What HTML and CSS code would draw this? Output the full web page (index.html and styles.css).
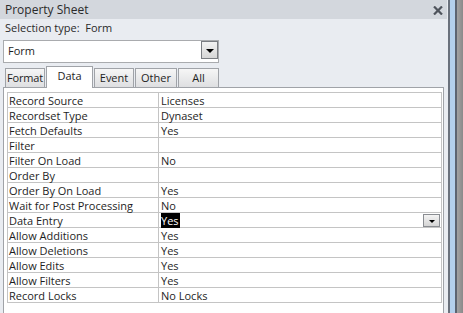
FILE: index.html
```html
<!DOCTYPE html>
<html lang="en">
<head>
    <meta charset="UTF-8">
    <title>Property Sheet</title>
    <link rel="stylesheet" href="styles.css">
</head>
<body>

<div class="window">
    <div class="sheet">
        <!-- Title bar -->
        <div class="title-bar">
            <span>Property Sheet</span>
            <span class="close">
                <svg width="10" height="9" viewBox="0 0 10 9">
                    <path d="M1 0.5 L9 8.5 M9 0.5 L1 8.5" stroke="#4f545c" stroke-width="2.2"/>
                </svg>
            </span>
        </div>

        <div class="selection">Selection type:&nbsp; Form</div>

        <!-- Object picker -->
        <div class="combo">
            <span class="combo-text">Form</span>
            <span class="combo-btn"><span class="arrow"></span></span>
        </div>

        <!-- Tabs -->
        <div class="tabs">
            <div class="tab tab-format">Format</div>
            <div class="tab tab-data active">Data</div>
            <div class="tab tab-event">Event</div>
            <div class="tab tab-other">Other</div>
            <div class="tab tab-all">All</div>
        </div>

        <div class="panel">
            <table class="props">
                <tr><td class="name">Record Source</td><td>Licenses</td></tr>
                <tr><td class="name">Recordset Type</td><td>Dynaset</td></tr>
                <tr><td class="name">Fetch Defaults</td><td>Yes</td></tr>
                <tr><td class="name">Filter</td><td></td></tr>
                <tr><td class="name">Filter On Load</td><td>No</td></tr>
                <tr><td class="name">Order By</td><td></td></tr>
                <tr><td class="name">Order By On Load</td><td>Yes</td></tr>
                <tr><td class="name">Wait for Post Processing</td><td>No</td></tr>
                <tr>
                    <td class="name">Data Entry</td>
                    <td class="editing">
                        <span class="selected">Yes</span>
                        <span class="cell-btn"><span class="arrow small"></span></span>
                    </td>
                </tr>
                <tr><td class="name">Allow Additions</td><td>Yes</td></tr>
                <tr><td class="name">Allow Deletions</td><td>Yes</td></tr>
                <tr><td class="name">Allow Edits</td><td>Yes</td></tr>
                <tr><td class="name">Allow Filters</td><td>Yes</td></tr>
                <tr><td class="name">Record Locks</td><td>No Locks</td></tr>
            </table>
        </div>
    </div>

    <!-- Window edge / scroll strip -->
    <div class="edge"></div>
</div>

</body>
</html>
```

FILE: styles.css
```css
* {
    margin: 0;
    padding: 0;
    box-sizing: border-box;
}

body {
    font-family: 'Open Sans', 'Noto Sans', sans-serif;
    font-size: 11px;
    color: #1e1e1e;
    background-color: #e9ecf1;
    overflow: hidden;
}

.window {
    display: flex;
    width: 463px;
    height: 313px;
}

.sheet {
    width: 447px;
    display: flex;
    flex-direction: column;
}

.title-bar {
    height: 19px;
    background-color: #d3d7dd;
    padding-left: 5px;
    padding-right: 4px;
    display: flex;
    align-items: center;
    justify-content: space-between;
    font-size: 12px;
    color: #2a2a2a;
}

.close {
    display: flex;
    margin-top: 1px;
}

.selection {
    height: 17px;
    padding-left: 5px;
    display: flex;
    align-items: center;
    color: #2a2a2a;
}

.combo {
    margin: 4px 0 0 3px;
    width: 216px;
    height: 23px;
    background-color: #fff;
    border: 1px solid #a9abae;
    display: flex;
    justify-content: space-between;
}

.combo-text {
    padding-left: 4px;
    line-height: 20px;
    font-size: 11px;
}

.combo-btn {
    width: 17px;
    height: 18px;
    border: 1px solid #7a7d82;
    background: linear-gradient(#f2f2f2, #d6d6d6);
    display: flex;
    align-items: center;
    justify-content: center;
}

.arrow {
    width: 0;
    height: 0;
    border-left: 4px solid transparent;
    border-right: 4px solid transparent;
    border-top: 4px solid #000;
    margin-top: 1px;
}

.arrow.small {
    border-left-width: 3px;
    border-right-width: 3px;
    border-top-width: 3px;
}

.tabs {
    display: flex;
    align-items: flex-end;
    gap: 1px;
    margin-top: 3px;
    padding-left: 5px;
    height: 21px;
    position: relative;
    z-index: 1;
}

.tab {
    height: 19px;
    border: 1px solid #a0a3a8;
    border-bottom: none;
    background: linear-gradient(#f6f6f6, #dedfe1);
    text-align: center;
    line-height: 18px;
    font-size: 11px;
}

.tab-format { width: 40px; letter-spacing: -0.2px; }
.tab-data { width: 47px; }
.tab-event { width: 40px; }
.tab-other { width: 42px; }
.tab-all { width: 41px; }

.tab.active {
    height: 22px;
    background: #fff;
    line-height: 17px;
    margin-bottom: -1px;
}

.panel {
    margin-left: 3px;
    width: 441px;
    flex: 1;
    background-color: #fff;
    border: 1px solid #a0a3a8;
    border-bottom: none;
    padding: 4px 1px 0 3px;
}

.props {
    width: 435px;
    border-collapse: collapse;
}

.props td {
    height: 15px;
    border: 1px solid #c4c4c4;
    padding: 0 0 0 2px;
    line-height: 13px;
    white-space: nowrap;
}

.props td.name {
    width: 151px;
    padding-left: 1px;
}

.editing {
    position: relative;
}

.selected {
    background-color: #000;
    color: #fff;
    padding: 0 1px 0 0;
}

.cell-btn {
    position: absolute;
    right: 1px;
    top: 1px;
    width: 17px;
    height: 13px;
    border: 1px solid #8a8d92;
    background: linear-gradient(#f4f4f4, #d4d4d4);
    display: flex;
    align-items: center;
    justify-content: center;
}

.edge {
    width: 16px;
    background: linear-gradient(to right,
        #e9ecf1 0, #e9ecf1 1px,
        #6a717c 1px, #6a717c 3px,
        #b3d0ec 3px, #b3d0ec 8px,
        #5c6470 8px, #5c6470 10px,
        #a2a2a2 10px, #8a8a8a 16px);
}
```
